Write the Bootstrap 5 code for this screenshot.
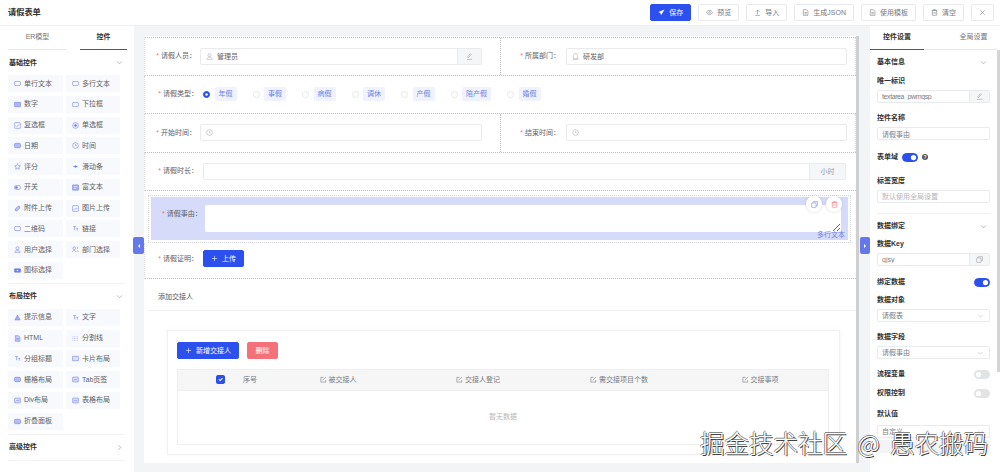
<!DOCTYPE html>
<html lang="zh-CN">
<head>
  <meta charset="UTF-8" />
  <meta name="viewport" content="width=device-width, initial-scale=1.0" />
  <title>请假表单</title>
  <link href="https://cdn.jsdelivr.net/npm/bootstrap@5.3.0/dist/css/bootstrap.min.css" rel="stylesheet" />
  <style>
    html, body { height: 474px; overflow: hidden; }
    body {
      font-family: "Liberation Sans", "Noto Sans CJK SC", sans-serif;
      font-size: 7px;
      line-height: 12px;
      color: #606266;
      background: #fff;
      position: relative;
    }
    .ic { width: 7px; height: 7px; flex: none; fill: none; stroke: currentColor; stroke-width: 1.3; }

    /* top bar */
    .topbar { height: 26px; border-bottom: 1px solid #eeeff1; padding: 0 6px 0 8px; }
    .page-title { font-size: 8.2px; font-weight: 700; color: #303133; }
    .tool-row { gap: 7px; }
    .tool-btn { --bs-btn-padding-x: 7px; --bs-btn-padding-y: 0; --bs-btn-font-size: 7px; --bs-btn-border-radius: 2px; --bs-btn-line-height: 15px; --bs-btn-border-color: #e8e9eb; --bs-btn-color: #77797e; --bs-btn-bg: #fff; }
    .btn-primary { --bs-btn-bg: #2b50ed; --bs-btn-border-color: #2b50ed; --bs-btn-color: #fff; }
    .btn-danger { --bs-btn-bg: #f4717a; --bs-btn-border-color: #f4717a; }

    .workspace { height: 446px; }

    /* left palette */
    .palette { width: 134px; flex: none; }
    .side-tabs { height: 24px; }
    .side-tab { color: #777; border-bottom: 1px solid #e6e7ea; text-align: center; line-height: 22px; }
    .side-tab.active-tab { color: #303133; font-weight: 700; border-bottom-color: #2b50ed; }
    .tabs-left .side-tab:first-child { width: 59px; margin: 0 13px 0 8px; }
    .tabs-left .side-tab:last-child { width: 47px; }
    .group-head { height: 25px; padding: 0 11px 0 9px; font-weight: 700; color: #303133; }
    .group-head svg { color: #888; }
    .group-rule { border-top: 1px solid #f0f1f3; margin: 0 9px 0 8px; }
    .tile-grid { display: grid; grid-template-columns: 55px 54px; grid-auto-rows: 17px; gap: 3.75px 3px; padding-left: 8px; margin-bottom: 4px; }
    .tile { background: #f8f9fc; display: flex; align-items: center; gap: 3px; padding-left: 6px; color: #606266; white-space: nowrap; }
    .tile svg { color: #6f80e8; }

    /* canvas */
    .canvas-wrap { flex: 1; background: #f3f4f5; padding: 10px 0 8px 10px; position: relative; }
    .paper { width: 715px; height: 427px; background: #fff; padding-top: 1px; border-right: 3px solid #cfcfd1; }
    .frow { height: 38.5px; border-bottom: 1px dotted #bcbcbe; border-left: 1px dotted #d8d8da; }
    .frow.first-row { border-top: 1px dotted #bcbcbe; }
    .fcell { height: 100%; }
    .fcell-left { width: 356px; border-right: 1px dotted #bcbcbe; padding-right: 18px; }
    .fcell-right { flex: 1; border-right: 1px dotted #d8d8da; padding-right: 8px; }
    .flabel { flex: none; text-align: right; white-space: nowrap; }
    .flabel i { color: #f4717a; font-style: normal; margin-right: 2px; }
    .w-a { width: 51px; margin-right: 4px; }
    .w-b { width: 59px; margin-right: 6px; }
    .w-c { width: 53px; margin-right: 5px; }

    .fake-input, .fake-input:focus { font-size: 7px; line-height: 15px; padding: 0 5px; height: 17px; min-height: 0; border-radius: 2px; border-color: #e9eaec; color: #606266; box-shadow: none; }
    .icon-input { gap: 4px; align-items: center; }
    .icon-input svg { color: #a9abb0; }
    .addon { font-size: 7px; line-height: 15px; padding: 0; justify-content: center; background: #f5f6f7; border-color: #e9eaec; color: #9a9ca1; border-radius: 2px; }
    .addon-s { width: 25px; }
    .addon-m { width: 37px; }
    .addon-r { width: 21px; }
    .duration-pad { width: 10px; flex: none; }

    .radio-row .form-check-input { width: 7px; height: 7px; margin: 0; flex: none; border-color: #e6e7e9; }
    .radio-row .form-check-input:checked { background-color: #2b50ed; border-color: #2b50ed; }
    .radio-row .form-check-input.rgap { margin-left: 16px; }
    .rtag { height: 14px; line-height: 14px; padding: 0 4px; background: #f0f3ff; color: #6f80e8; border-radius: 2px; margin-left: 4.500px; white-space: nowrap; }

    /* selected field */
    .sel-outline { margin: 4px 5px 0 4px; height: 48px; border: 1px dotted #d4d5d8; padding: 1px 2px 1px 2px; }
    .sel-box { height: 43px; background: #d5dbf9; padding: 8px 7px 0 11px; position: relative; }
    .sel-box .flabel { width: 38px; margin: 3px 5px 0 0; }
    .sel-box textarea { height: 27px; min-height: 0; font-size: 7px; padding: 2px 5px; border: 0; border-radius: 2px; }
    .widget-name { position: absolute; right: 3px; bottom: 0; color: #6f80e8; line-height: 11px; }
    .round-btn { position: absolute; top: 0; width: 16px; height: 16px; border-radius: 50%; background: #fff; box-shadow: 0 0 3px rgba(90, 100, 140, .25); display: flex; align-items: center; justify-content: center; }
    .round-copy { right: 26px; top: -1px; color: #6f80e8; }
    .round-del { right: 6px; top: -1px; color: #f4717a; }

    .upload-row { height: 36px; padding-bottom: 4px; border-bottom: 1px dotted #bcbcbe; border-left: 1px dotted #d8d8da; }
    .blue-btn { --bs-btn-padding-x: 7px; --bs-btn-padding-y: 0; --bs-btn-font-size: 7px; --bs-btn-line-height: 15px; --bs-btn-border-radius: 2px; }
    .btn-danger.blue-btn { --bs-btn-padding-x: 7.500px; }
    .section-title { height: 32px; margin: 0 0 0 4px; padding: 4px 0 0 10px; border-bottom: 1px solid #eeeff1; color: #555; }
    .sub-card { margin: 19px 16px 0 23px; height: 125px; border: 1px solid #f0f1f3; border-radius: 0; padding: 11px 10px 0 9px; box-shadow: 0 0 4px rgba(0, 0, 0, .04); }
    .btn-row { gap: 8px; }
    .handover-wrap { margin-top: 10px; border: 1px solid #eeeff1; }
    .table.handover-table { margin: 0; table-layout: fixed; width: 100%; font-size: 7px; color: #606266; }
    .table.handover-table th { font-weight: 400; background: #f6f6f7; height: 20px; padding: 0; text-align: center; vertical-align: middle; border-bottom: 1px solid #eeeff1; white-space: nowrap; color: #77797e; }
    .table.handover-table td { height: 54px; padding: 0; text-align: center; vertical-align: middle; color: #b5b6ba; border: 0; }
    .table.handover-table th svg { margin-right: 2px; vertical-align: -1px; }
    .table.handover-table .check-col { text-align: right; padding-right: 9px; }
    .check-col .form-check-input { width: 9px; height: 9px; margin: 0; background-color: #2b50ed; border-color: #2b50ed; vertical-align: middle; }

    /* collapse handles */
    .handle { position: absolute; top: 211px; width: 11px; height: 17px; background: #6478ea; border-radius: 2px; display: flex; align-items: center; justify-content: center; }
    .handle-left { left: -1px; }
    .handle-right { left: 726px; width: 10px; }
    .handle span { border: 2px solid transparent; }
    .handle-left span { border-right-color: #fff; border-left: 0; }
    .handle-right span { border-left-color: #fff; border-right: 0; }

    /* right settings */
    .settings { width: 130px; flex: none; position: relative; padding-right: 3px; }
    .settings::after { content: ""; position: absolute; right: 0; top: 24px; width: 3px; height: 322px; background: #d4d4d6; }
    .tabs-right .side-tab:first-child { width: 54px; }
    .tabs-right .side-tab:last-child { flex: 1; padding-left: 26px; }
    .prop-body { padding: 0 7px; }
    .prop-head { height: 24px; font-weight: 700; color: #303133; padding-right: 3px; }
    .prop-head svg { color: #888; }
    .prop-label { font-weight: 700; color: #303133; height: 12px; margin-bottom: 3px; white-space: nowrap; }
    .prop-label.tall-gap { margin-bottom: 5px; }
    .prop-row { height: 16px; font-weight: 700; color: #303133; }
    .prop-input { height: 13px; line-height: 11px; font-size: 7px; padding: 0 4px; border-radius: 2px; border-color: #e9eaec; color: #7b7d82; min-height: 0; }
    .prop-input::placeholder { color: #b5b6ba; }
    .uid-input { letter-spacing: -.4px; }
    .prop-select { background-image: url("data:image/svg+xml,%3csvg xmlns='http://www.w3.org/2000/svg' viewBox='0 0 16 16'%3e%3cpath fill='none' stroke='%23b5b6ba' stroke-width='1.500' d='M2 5l6 6 6-6'/%3e%3c/svg%3e"); background-size: 7px 6px; background-position: right 5px center; padding-right: 12px; }
    .input-group > .prop-input { height: 13px; }
    .switch-wrap { padding: 0; margin: 0; min-height: 0; display: flex; }
    .switch-wrap .form-check-input { --bs-form-switch-bg: url("data:image/svg+xml,%3csvg xmlns='http://www.w3.org/2000/svg' viewBox='-4 -4 8 8'%3e%3ccircle r='3' fill='%23fff'/%3e%3c/svg%3e"); width: 16px; height: 9px; margin: 0; border-color: #e2e3e5; background-color: #e2e3e5; }
    .switch-wrap .form-check-input:checked { background-color: #2b50ed; border-color: #2b50ed; }
    .help-dot { width: 6px; height: 6px; border-radius: 50%; background: #555; color: #fff; font-size: 5px; line-height: 6px; text-align: center; font-weight: 700; }
    .prop-rule { border-top: 1px solid #f0f1f3; }
    .grey-strip { height: 13px; background: #f3f4f5; border-radius: 2px; }
    .sp-1 { margin-top: 1px; } .sp-2 { margin-top: 2px; } .sp-3 { margin-top: 3px; } .sp-4 { margin-top: 4px; }
    .sp-7 { margin-top: 7px; } .sp-8 { margin-top: 8px; } .sp-9 { margin-top: 9px; } .sp-10 { margin-top: 10px; }

    /* watermark over the shot */
    .watermark { position: absolute; left: 700px; top: 426px; font-family: "Noto Sans CJK SC", sans-serif; font-size: 24.5px; font-weight: 300; line-height: 34px; word-spacing: 5px; color: #fff; white-space: nowrap; text-shadow: 1px 1px 0 #444, -1px 0 0 #888, 0 -1px 0 #888; }
  </style>
</head>
<body>

  <svg width="0" height="0" class="position-absolute">
    <defs>
      <symbol id="i-box" viewBox="0 0 16 16"><rect x="1.5" y="3.5" width="13" height="9" rx="1"/></symbol>
      <symbol id="i-num" viewBox="0 0 16 16"><rect x="1" y="3" width="14" height="10" rx="1" fill="currentColor" fill-opacity=".55"/></symbol>
      <symbol id="i-check" viewBox="0 0 16 16"><rect x="1.5" y="1.5" width="13" height="13" rx="1.5"/><path d="M4.5 8l2.500 2.500L11.500 5.500"/></symbol>
      <symbol id="i-radio" viewBox="0 0 16 16"><circle cx="8" cy="8" r="6.500"/><circle cx="8" cy="8" r="2.500" fill="currentColor"/></symbol>
      <symbol id="i-date" viewBox="0 0 16 16"><rect x="1" y="3" width="14" height="10" rx="3" fill="currentColor" fill-opacity=".5"/></symbol>
      <symbol id="i-clock" viewBox="0 0 16 16"><circle cx="8" cy="8" r="6.500"/><path d="M8 4.500V8.500H11"/></symbol>
      <symbol id="i-star" viewBox="0 0 16 16"><path d="M8 1.500l2 4.300 4.600.6-3.400 3.200.9 4.600L8 11.900l-4.100 2.300.9-4.600L1.400 6.400 6 5.800z"/></symbol>
      <symbol id="i-slider" viewBox="0 0 16 16"><path d="M2 8H14"/><circle cx="8" cy="8" r="2" fill="currentColor"/></symbol>
      <symbol id="i-switch" viewBox="0 0 16 16"><rect x="1" y="3.500" width="14" height="9" rx="4.500"/><circle cx="5.500" cy="8" r="2.500" fill="currentColor"/></symbol>
      <symbol id="i-rich" viewBox="0 0 16 16"><rect x="1" y="2" width="14" height="12" rx="1" fill="currentColor" fill-opacity=".6"/><path d="M3.500 6H12.500M3.500 10H9" stroke="#fff"/></symbol>
      <symbol id="i-clip" viewBox="0 0 16 16"><path d="M3 9l6-6c3-2 6 1 4 4l-6 6c-3 2-6-1-4-4z" fill="currentColor" fill-opacity=".45"/></symbol>
      <symbol id="i-image" viewBox="0 0 16 16"><rect x="1.500" y="1.500" width="13" height="13" rx="1"/><path d="M4 11l3-3 2 2 3-3"/></symbol>
      <symbol id="i-text" viewBox="0 0 16 16"><path d="M2.500 3.500H9M5.800 3.500V12M10 8H14M12 8V13"/></symbol>
      <symbol id="i-user" viewBox="0 0 16 16"><circle cx="8" cy="5" r="3.500"/><path d="M2 14.500c.5-4 3-5 6-5s5.500 1 6 5z"/></symbol>
      <symbol id="i-dept" viewBox="0 0 16 16"><circle cx="5" cy="5" r="3"/><path d="M1 14c.3-3 2-4 4-4s3.500 1 4 4M11 2c2 0 3 3 1 5M12 10c1.500.5 2.500 2 2.500 4"/></symbol>
      <symbol id="i-chip" viewBox="0 0 16 16"><rect x="1" y="4" width="14" height="8" rx="1" fill="currentColor"/><circle cx="8" cy="8" r="1.500" fill="#fff" stroke="none"/></symbol>
      <symbol id="i-warn" viewBox="0 0 16 16"><path d="M8 2.500L14 13.500H2z" fill="currentColor" fill-opacity=".6"/></symbol>
      <symbol id="i-html" viewBox="0 0 16 16"><path d="M3 1.500H10L13.500 5V14.500H3z" fill="currentColor" fill-opacity=".35"/><path d="M5.500 8H11M5.500 11H11"/></symbol>
      <symbol id="i-line" viewBox="0 0 16 16"><path d="M1 4H15M1 8H15M1 12H15" stroke-dasharray="2 1.500" stroke-opacity=".7"/></symbol>
      <symbol id="i-card" viewBox="0 0 16 16"><rect x="1" y="3" width="14" height="10" rx="1" fill="currentColor" fill-opacity=".2"/></symbol>
      <symbol id="i-panel" viewBox="0 0 16 16"><rect x="1.500" y="2.500" width="13" height="11" rx="1" fill="currentColor" fill-opacity=".2"/><path d="M4 10l3-3 2 2 3-2"/></symbol>
      <symbol id="i-down" viewBox="0 0 16 16"><path d="M2.500 5.500L8 11L13.500 5.500"/></symbol>
      <symbol id="i-right" viewBox="0 0 16 16"><path d="M5.500 2.500L11 8L5.500 13.500"/></symbol>
      <symbol id="i-plus" viewBox="0 0 16 16"><path d="M8 2V14M2 8H14"/></symbol>
      <symbol id="i-send" viewBox="0 0 16 16"><path d="M15 1L1 7l4.500 2L7 14z" fill="currentColor" stroke="none"/></symbol>
      <symbol id="i-eye" viewBox="0 0 16 16"><path d="M1 8c2-3.500 4.500-5 7-5s5 1.500 7 5c-2 3.500-4.500 5-7 5s-5-1.500-7-5z"/><circle cx="8" cy="8" r="2"/></symbol>
      <symbol id="i-up" viewBox="0 0 16 16"><path d="M8 12V3M4 6.500L8 2.500L12 6.500M2.500 14.500H13.500"/></symbol>
      <symbol id="i-doc" viewBox="0 0 16 16"><path d="M3 1.500H10L13.500 5V14.500H3z"/><path d="M5.500 8H11M5.500 11H11"/></symbol>
      <symbol id="i-clear" viewBox="0 0 16 16"><rect x="3" y="3" width="10" height="11.500" rx="1"/><path d="M1.500 3H14.500M6 1.500H10M6.500 7V11M9.500 7V11"/></symbol>
      <symbol id="i-x" viewBox="0 0 16 16"><path d="M3 3L13 13M13 3L3 13"/></symbol>
      <symbol id="i-edit" viewBox="0 0 16 16"><path d="M13 9V14H2V3H8M6 10L14 2"/></symbol>
      <symbol id="i-pen" viewBox="0 0 16 16"><path d="M2 14.500H14M5 11L12 3.500l-2-2L4 8.500z"/></symbol>
      <symbol id="i-home" viewBox="0 0 16 16"><path d="M3 14V6.500C3 3.500 5 1.500 8 1.500s5 2 5 5V14zM1.500 14H14.500"/></symbol>
      <symbol id="i-copy" viewBox="0 0 16 16"><rect x="1.500" y="4.500" width="10" height="10" rx="1"/><path d="M5 4V1.500H14.500V11H12"/></symbol>
    </defs>
  </svg>

  <header class="topbar d-flex align-items-center justify-content-between">
    <div class="page-title">请假表单</div>
    <div class="d-flex tool-row">
      <button class="btn btn-primary tool-btn d-flex align-items-center gap-1"><svg class="ic"><use href="#i-send"/></svg>保存</button>
      <button class="btn tool-btn d-flex align-items-center gap-1"><svg class="ic"><use href="#i-eye"/></svg>预览</button>
      <button class="btn tool-btn d-flex align-items-center gap-1"><svg class="ic"><use href="#i-up"/></svg>导入</button>
      <button class="btn tool-btn d-flex align-items-center gap-1"><svg class="ic"><use href="#i-doc"/></svg>生成JSON</button>
      <button class="btn tool-btn d-flex align-items-center gap-1"><svg class="ic"><use href="#i-doc"/></svg>使用模板</button>
      <button class="btn tool-btn d-flex align-items-center gap-1"><svg class="ic"><use href="#i-clear"/></svg>清空</button>
      <button class="btn tool-btn d-flex align-items-center"><svg class="ic"><use href="#i-x"/></svg></button>
    </div>
  </header>

  <div class="workspace d-flex">
    <aside class="palette">
      <div class="side-tabs tabs-left d-flex">
        <div class="side-tab">ER模型</div>
        <div class="side-tab active-tab">控件</div>
      </div>
      <div class="group-head d-flex align-items-center justify-content-between">基础控件<svg class="ic"><use href="#i-down"/></svg></div>
      <div class="tile-grid">
        <div class="tile"><svg class="ic"><use href="#i-box"/></svg>单行文本</div>
        <div class="tile"><svg class="ic"><use href="#i-box"/></svg>多行文本</div>
        <div class="tile"><svg class="ic"><use href="#i-num"/></svg>数字</div>
        <div class="tile"><svg class="ic"><use href="#i-box"/></svg>下拉框</div>
        <div class="tile"><svg class="ic"><use href="#i-check"/></svg>复选框</div>
        <div class="tile"><svg class="ic"><use href="#i-radio"/></svg>单选框</div>
        <div class="tile"><svg class="ic"><use href="#i-date"/></svg>日期</div>
        <div class="tile"><svg class="ic"><use href="#i-clock"/></svg>时间</div>
        <div class="tile"><svg class="ic"><use href="#i-star"/></svg>评分</div>
        <div class="tile"><svg class="ic"><use href="#i-slider"/></svg>滑动条</div>
        <div class="tile"><svg class="ic"><use href="#i-switch"/></svg>开关</div>
        <div class="tile"><svg class="ic"><use href="#i-rich"/></svg>富文本</div>
        <div class="tile"><svg class="ic"><use href="#i-clip"/></svg>附件上传</div>
        <div class="tile"><svg class="ic"><use href="#i-image"/></svg>图片上传</div>
        <div class="tile"><svg class="ic"><use href="#i-box"/></svg>二维码</div>
        <div class="tile"><svg class="ic"><use href="#i-text"/></svg>链接</div>
        <div class="tile"><svg class="ic"><use href="#i-user"/></svg>用户选择</div>
        <div class="tile"><svg class="ic"><use href="#i-dept"/></svg>部门选择</div>
        <div class="tile"><svg class="ic"><use href="#i-chip"/></svg>图标选择</div>
      </div>
      <div class="group-rule"></div>
      <div class="group-head d-flex align-items-center justify-content-between">布局控件<svg class="ic"><use href="#i-down"/></svg></div>
      <div class="tile-grid">
        <div class="tile"><svg class="ic"><use href="#i-warn"/></svg>提示信息</div>
        <div class="tile"><svg class="ic"><use href="#i-text"/></svg>文字</div>
        <div class="tile"><svg class="ic"><use href="#i-html"/></svg>HTML</div>
        <div class="tile"><svg class="ic"><use href="#i-line"/></svg>分割线</div>
        <div class="tile"><svg class="ic"><use href="#i-text"/></svg>分组标题</div>
        <div class="tile"><svg class="ic"><use href="#i-card"/></svg>卡片布局</div>
        <div class="tile"><svg class="ic"><use href="#i-date"/></svg>栅格布局</div>
        <div class="tile"><svg class="ic"><use href="#i-panel"/></svg>Tab页签</div>
        <div class="tile"><svg class="ic"><use href="#i-panel"/></svg>Div布局</div>
        <div class="tile"><svg class="ic"><use href="#i-panel"/></svg>表格布局</div>
        <div class="tile"><svg class="ic"><use href="#i-date"/></svg>折叠面板</div>
      </div>
      <div class="group-rule"></div>
      <div class="group-head d-flex align-items-center justify-content-between">高级控件<svg class="ic"><use href="#i-right"/></svg></div>
      <div class="group-rule"></div>
    </aside>

    <main class="canvas-wrap">
      <div class="paper">
        <div class="frow first-row d-flex">
          <div class="fcell fcell-left d-flex align-items-center">
            <div class="flabel w-a"><i>*</i>请假人员：</div>
            <div class="input-group flex-nowrap">
              <div class="form-control fake-input icon-input d-flex"><svg class="ic"><use href="#i-user"/></svg>管理员</div>
              <span class="input-group-text addon addon-s"><svg class="ic"><use href="#i-pen"/></svg></span>
            </div>
          </div>
          <div class="fcell fcell-right d-flex align-items-center">
            <div class="flabel w-b"><i>*</i>所属部门：</div>
            <div class="form-control fake-input icon-input d-flex"><svg class="ic"><use href="#i-home"/></svg>研发部</div>
          </div>
        </div>

        <div class="frow d-flex align-items-center">
          <div class="flabel w-c"><i>*</i>请假类型：</div>
          <div class="radio-row d-flex align-items-center">
            <input class="form-check-input" type="radio" name="leave" checked><span class="rtag">年假</span>
            <input class="form-check-input rgap" type="radio" name="leave"><span class="rtag">事假</span>
            <input class="form-check-input rgap" type="radio" name="leave"><span class="rtag">病假</span>
            <input class="form-check-input rgap" type="radio" name="leave"><span class="rtag">调休</span>
            <input class="form-check-input rgap" type="radio" name="leave"><span class="rtag">产假</span>
            <input class="form-check-input rgap" type="radio" name="leave"><span class="rtag">陪产假</span>
            <input class="form-check-input rgap" type="radio" name="leave"><span class="rtag">婚假</span>
          </div>
        </div>

        <div class="frow d-flex">
          <div class="fcell fcell-left d-flex align-items-center">
            <div class="flabel w-a"><i>*</i>开始时间：</div>
            <div class="form-control fake-input icon-input d-flex"><svg class="ic"><use href="#i-clock"/></svg></div>
          </div>
          <div class="fcell fcell-right d-flex align-items-center">
            <div class="flabel w-b"><i>*</i>结束时间：</div>
            <div class="form-control fake-input icon-input d-flex"><svg class="ic"><use href="#i-clock"/></svg></div>
          </div>
        </div>

        <div class="frow d-flex align-items-center">
          <div class="flabel w-c"><i>*</i>请假时长：</div>
          <div class="input-group flex-nowrap">
            <input class="form-control fake-input" type="text">
            <span class="input-group-text addon addon-m">小时</span>
          </div>
          <div class="duration-pad"></div>
        </div>

        <div class="sel-outline">
          <div class="sel-box d-flex">
            <div class="flabel"><i>*</i>请假事由：</div>
            <textarea class="form-control"></textarea>
            <span class="round-btn round-copy"><svg class="ic"><use href="#i-copy"/></svg></span>
            <span class="round-btn round-del"><svg class="ic"><use href="#i-clear"/></svg></span>
            <span class="widget-name">多行文本</span>
          </div>
        </div>

        <div class="upload-row d-flex align-items-center">
          <div class="flabel w-c"><i>*</i>请假证明：</div>
          <button class="btn btn-primary blue-btn d-flex align-items-center gap-1"><svg class="ic"><use href="#i-plus"/></svg>上传</button>
        </div>

        <div class="section-title d-flex align-items-center">添加交接人</div>

        <div class="sub-card">
          <div class="d-flex btn-row">
            <button class="btn btn-primary blue-btn d-flex align-items-center gap-1"><svg class="ic"><use href="#i-plus"/></svg>新增交接人</button>
            <button class="btn btn-danger blue-btn">删除</button>
          </div>
          <div class="handover-wrap">
            <table class="table handover-table">
              <colgroup>
                <col style="width:56px"><col style="width:32px"><col style="width:144px"><col style="width:136px"><col style="width:146px"><col>
              </colgroup>
              <thead>
                <tr>
                  <th class="check-col"><input class="form-check-input" type="checkbox" checked></th>
                  <th>序号</th>
                  <th><svg class="ic"><use href="#i-edit"/></svg>被交接人</th>
                  <th><svg class="ic"><use href="#i-edit"/></svg>交接人登记</th>
                  <th><svg class="ic"><use href="#i-edit"/></svg>需交接项目个数</th>
                  <th><svg class="ic"><use href="#i-edit"/></svg>交接事项</th>
                </tr>
              </thead>
              <tbody>
                <tr><td colspan="6">暂无数据</td></tr>
              </tbody>
            </table>
          </div>
        </div>
      </div>
      <div class="handle handle-left"><span></span></div>
      <div class="handle handle-right"><span></span></div>
    </main>

    <aside class="settings">
      <div class="side-tabs tabs-right d-flex">
        <div class="side-tab active-tab">控件设置</div>
        <div class="side-tab">全局设置</div>
      </div>
      <div class="prop-body">
        <div class="prop-head d-flex align-items-center justify-content-between">基本信息<svg class="ic"><use href="#i-down"/></svg></div>
        <div class="prop-label sp-1">唯一标识</div>
        <div class="input-group flex-nowrap">
          <input class="form-control prop-input uid-input" type="text" value="textarea_pwmgsp">
          <span class="input-group-text addon addon-r"><svg class="ic"><use href="#i-pen"/></svg></span>
        </div>
        <div class="prop-label sp-9">控件名称</div>
        <input class="form-control prop-input" type="text" value="请假事由">
        <div class="prop-row sp-9 d-flex align-items-center gap-1">
          <span>表单域</span>
          <div class="form-check form-switch switch-wrap"><input class="form-check-input" type="checkbox" role="switch" checked></div>
          <span class="help-dot">?</span>
        </div>
        <div class="prop-label sp-10">标签宽度</div>
        <input class="form-control prop-input" type="text" placeholder="默认使用全局设置">
        <div class="prop-rule sp-10"></div>
        <div class="prop-head d-flex align-items-center justify-content-between">数据绑定<svg class="ic"><use href="#i-down"/></svg></div>
        <div class="prop-label">数据Key</div>
        <div class="input-group flex-nowrap">
          <input class="form-control prop-input" type="text" value="qjsy">
          <span class="input-group-text addon addon-r"><svg class="ic"><use href="#i-copy"/></svg></span>
        </div>
        <div class="prop-row sp-8 d-flex align-items-center justify-content-between">
          绑定数据
          <div class="form-check form-switch switch-wrap"><input class="form-check-input" type="checkbox" role="switch" checked></div>
        </div>
        <div class="prop-label sp-4">数据对象</div>
        <select class="form-select prop-input prop-select"><option>请假表</option></select>
        <div class="prop-label sp-9">数据字段</div>
        <select class="form-select prop-input prop-select"><option>请假事由</option></select>
        <div class="prop-row sp-7 d-flex align-items-center justify-content-between">
          流程变量
          <div class="form-check form-switch switch-wrap"><input class="form-check-input" type="checkbox" role="switch"></div>
        </div>
        <div class="prop-row sp-3 d-flex align-items-center justify-content-between">
          权限控制
          <div class="form-check form-switch switch-wrap"><input class="form-check-input" type="checkbox" role="switch"></div>
        </div>
        <div class="prop-label tall-gap sp-7">默认值</div>
        <select class="form-select prop-input prop-select"><option>自定义</option></select>
        <div class="grey-strip sp-2"></div>
      </div>
    </aside>
  </div>

  <div class="watermark">掘金技术社区 @ 愚农搬码</div>

  <script src="https://cdn.jsdelivr.net/npm/bootstrap@5.3.0/dist/js/bootstrap.bundle.min.js"></script>
</body>
</html>
